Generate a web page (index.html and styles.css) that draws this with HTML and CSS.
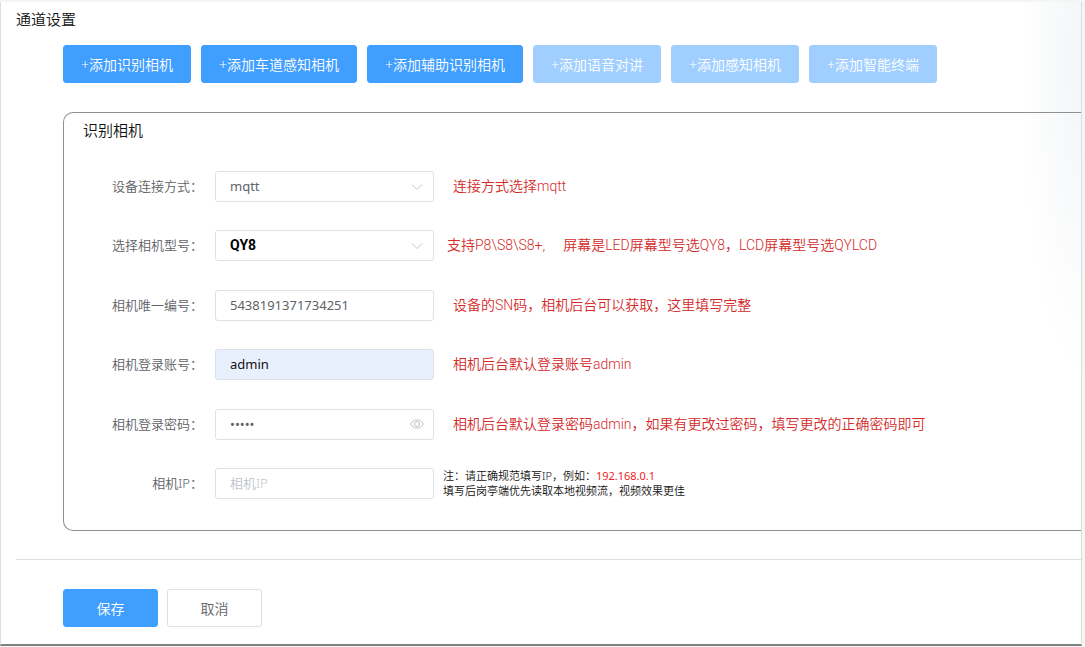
FILE: index.html
```html
<!DOCTYPE html>
<html lang="zh-CN">
<head>
<meta charset="utf-8">
<meta name="viewport" content="width=device-width, initial-scale=1">
<title>通道设置</title>
<link rel="stylesheet" href="styles.css">
</head>
<body>
<main class="panel">
  <h1 class="title">通道设置</h1>
  <div class="toolbar">
    <button class="btn primary" type="button">+添加识别相机</button>
    <button class="btn primary" type="button">+添加车道感知相机</button>
    <button class="btn primary" type="button">+添加辅助识别相机</button>
    <button class="btn primary" type="button" disabled>+添加语音对讲</button>
    <button class="btn primary" type="button" disabled>+添加感知相机</button>
    <button class="btn primary" type="button" disabled>+添加智能终端</button>
  </div>
  <form class="form">
    <section class="card">
      <h2 class="title">识别相机</h2>
      <div class="rows">
        <div class="row">
          <label class="label" for="conn">设备连接方式：</label>
          <div class="field">
            <select class="control" id="conn"><option>mqtt</option></select>
            <svg class="icon" viewBox="0 0 14 14" aria-hidden="true"><path d="M2 5.500l5 5 5-5"/></svg>
          </div>
          <p class="hint">连接方式选择mqtt</p>
        </div>
        <div class="row">
          <label class="label" for="model">选择相机型号：</label>
          <div class="field">
            <select class="control strong" id="model"><option>QY8</option></select>
            <svg class="icon" viewBox="0 0 14 14" aria-hidden="true"><path d="M2 5.500l5 5 5-5"/></svg>
          </div>
          <p class="hint near"><span>支持P8\S8\S8+,</span><span>屏幕是LED屏幕型号选QY8，LCD屏幕型号选QYLCD</span></p>
        </div>
        <div class="row">
          <label class="label" for="sn">相机唯一编号：</label>
          <div class="field"><input class="control" id="sn" type="text" value="5438191371734251"></div>
          <p class="hint">设备的SN码，相机后台可以获取，这里填写完整</p>
        </div>
        <div class="row">
          <label class="label" for="user">相机登录账号：</label>
          <div class="field"><input class="control filled" id="user" type="text" value="admin"></div>
          <p class="hint">相机后台默认登录账号admin</p>
        </div>
        <div class="row">
          <label class="label" for="pass">相机登录密码：</label>
          <div class="field">
            <input class="control" id="pass" type="password" value="admin">
            <svg class="icon" viewBox="0 0 14 14" aria-hidden="true"><path d="M.6 7C2.2 4.200 4.400 2.800 7 2.800S11.800 4.200 13.400 7C11.800 9.800 9.600 11.200 7 11.200S2.200 9.800.6 7z"/><circle cx="7" cy="7" r="2.600"/></svg>
          </div>
          <p class="hint">相机后台默认登录密码admin，如果有更改过密码，填写更改的正确密码即可</p>
        </div>
        <div class="row">
          <label class="label" for="ip">相机IP：</label>
          <div class="field"><input class="control" id="ip" type="text" placeholder="相机IP"></div>
          <p class="note">注：请正确规范填写IP，例如：<span class="sample">192.168.0.1</span><br>填写后岗亭端优先读取本地视频流，视频效果更佳</p>
        </div>
      </div>
    </section>
    <div class="actions">
      <button class="btn primary wide" type="button">保存</button>
      <button class="btn plain wide" type="button">取消</button>
    </div>
  </form>
</main>
</body>
</html>
```

FILE: styles.css
```css
* { box-sizing: border-box; }

body {
  margin: 0;
  padding: 2px 3px 1px 0;
  background: #f4f5f5;
  font-family: "Noto Sans", "Noto Sans CJK SC", sans-serif;
  font-size: 14px;
  font-weight: 350;
  color: #111;
}

h1, h2, p { margin: 0; }

.panel {
  padding: 7px 0 17px 15px;
  border-left: 1px solid #ddd;
  border-right: 1px solid #dcdddf;
  border-bottom: 2px solid #808080;
  background: radial-gradient(ellipse 60px 310px at 100% 60px, #f3f5f7, #fff) no-repeat #fff;
}

.title {
  font-size: 15px;
  font-weight: 350;
  line-height: 20px;
}

.toolbar {
  display: flex;
  flex-wrap: wrap;
  gap: 10px;
  padding: 16px 0 0 47px;
}

.btn {
  height: 38px;
  padding: 0 17px;
  border: 1px solid #409eff;
  border-radius: 3px;
  font: inherit;
  white-space: nowrap;
}

.primary { background: #409eff; color: #fff; }
.primary:disabled { background: #a0cfff; border-color: #a0cfff; }
.plain { background: #fff; border-color: #dcdfe6; color: #606266; }
.wide { width: 95px; }

.card {
  margin: 29px 0 0 47px;
  padding: 7px 0 31px 19px;
  border: 1px solid #909090;
  border-right: 0;
  border-radius: 10px 0 0 10px;
}

.rows {
  display: grid;
  align-content: space-between;
  min-height: 328px;
  margin-top: 31px;
}

.row { display: flex; align-items: center; }

.label {
  flex: none;
  width: 120px;
  padding-bottom: 2px;
  font-size: 13px;
  text-align: right;
  color: #606266;
}

.field {
  position: relative;
  flex: none;
  width: 219px;
  margin-left: 12px;
}

.control {
  display: block;
  width: 100%;
  height: 31px;
  padding: 0 30px 1px 14px;
  border: 1px solid #dfe1e6;
  border-radius: 3px;
  background: #fff;
  font: inherit;
  font-size: 13px;
  font-weight: 400;
  color: #606266;
  appearance: none;
}

.control::placeholder { color: #c0c4cc; font-weight: 350; }
.strong { font-family: Roboto, sans-serif; font-size: 14px; font-weight: 700; color: #000; }
.filled { background: #e8f0fe; color: #111; }

.icon {
  position: absolute;
  top: 8px;
  right: 10px;
  width: 14px;
  height: 14px;
  fill: none;
  stroke: #c0c4cc;
  pointer-events: none;
}

.hint {
  display: flex;
  gap: 18px;
  margin-left: 19px;
  padding-bottom: 1px;
  font-family: Roboto, "Noto Sans CJK SC", sans-serif;
  line-height: 20px;
  color: #d42a2a;
}

.near { margin-left: 13px; }

.note {
  margin-left: 9px;
  padding-bottom: 1px;
  font-size: 11px;
  line-height: 15px;
}

.sample { color: #f01c24; font-weight: 400; }

.actions {
  display: flex;
  gap: 9px;
  margin-top: 28px;
  padding: 29px 0 0 47px;
  border-top: 1px solid #dedede;
}
```
